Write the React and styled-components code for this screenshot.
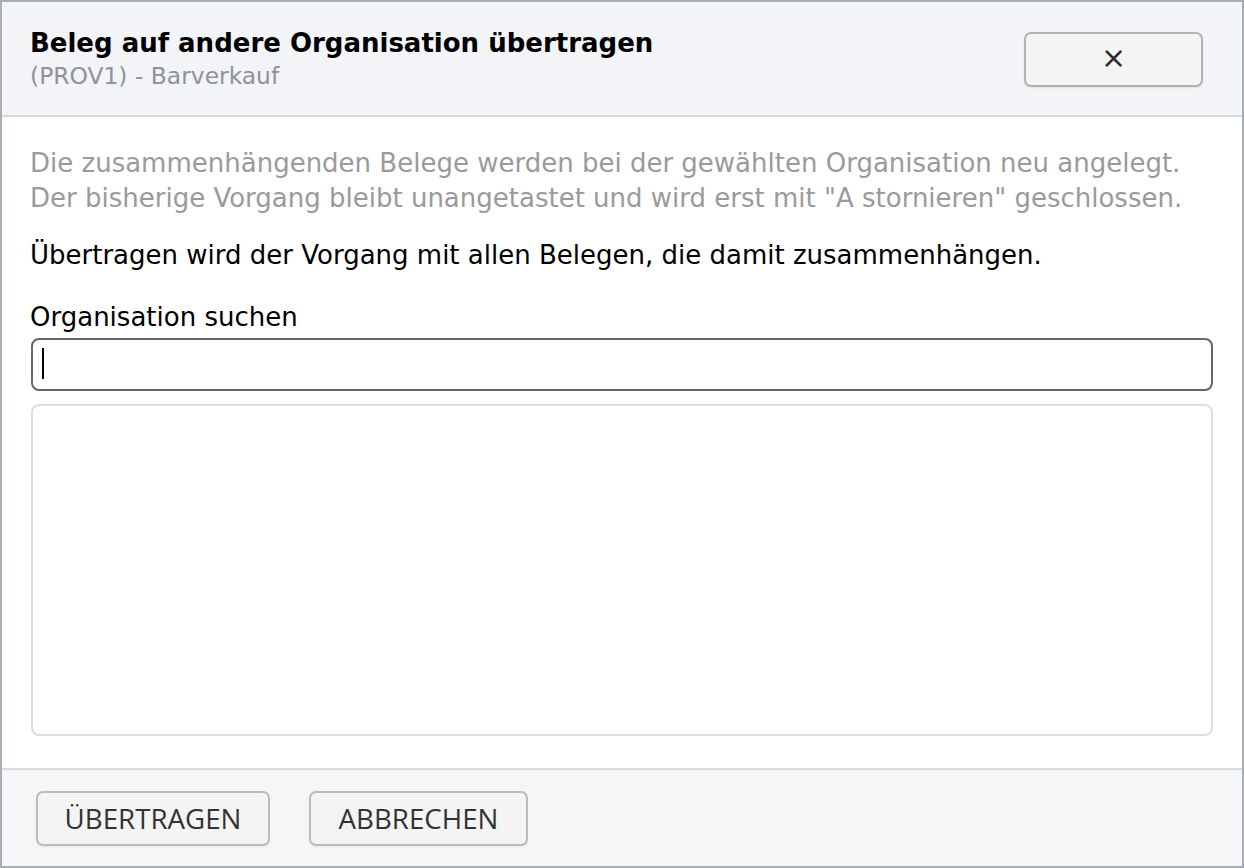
import React from 'react';
import styled, { createGlobalStyle } from 'styled-components';

const GlobalStyle = createGlobalStyle`
  html, body {
    margin: 0;
    padding: 0;
    background: #ffffff;
  }
  body {
    font-family: "DejaVu Sans", sans-serif;
  }
`;

const Dialog = styled.div`
  box-sizing: border-box;
  width: 1244px;
  height: 868px;
  border: 2px solid #a9adb5;
  display: flex;
  flex-direction: column;
  background: #fff;
`;

const Header = styled.div`
  background: #f3f4f8;
  border-bottom: 2px solid #d6dae0;
  height: 115px;
  box-sizing: border-box;
  display: flex;
  align-items: center;
  justify-content: space-between;
  padding: 0 39px 0 28px;
`;

const TitleBlock = styled.div`
  display: flex;
  flex-direction: column;
`;

const Title = styled.h2`
  margin: 0;
  font-size: 26px;
  font-weight: bold;
  color: #000;
  line-height: 34px;
`;

const Subtitle = styled.div`
  font-size: 23.4px;
  color: #8f9297;
  line-height: 32px;
`;

const CloseButton = styled.button`
  width: 179px;
  height: 55px;
  background: #f4f4f4;
  border: 2px solid #b2b2b2;
  border-radius: 7px;
  box-shadow: 0 1px 2px rgba(0, 0, 0, 0.08);
  color: #2a2a2a;
  font-family: "DejaVu Sans", sans-serif;
  font-size: 30px;
  line-height: 1;
  padding: 0 0 3px;
  cursor: pointer;
  display: flex;
  align-items: center;
  justify-content: center;
  margin-top: 2px;
`;

const Body = styled.div`
  flex: 1;
  padding: 29px 29px 32px 28px;
  display: flex;
  flex-direction: column;
`;

const Hint = styled.p`
  margin: 0;
  font-size: 26px;
  line-height: 35px;
  color: #9a9a9a;
`;

const Info = styled.p`
  margin: 22px 0 0;
  font-size: 26px;
  line-height: 35px;
  color: #000;
`;

const Label = styled.label`
  margin-top: 29px;
  font-size: 26px;
  line-height: 30px;
  color: #000;
`;

const InputWrap = styled.div`
  position: relative;
  margin-top: 6px;
  margin-left: 1px;
`;

const SearchInput = styled.input`
  box-sizing: border-box;
  display: block;
  height: 53px;
  width: 100%;
  border: 2px solid #666666;
  border-radius: 8px;
  padding: 0 10px;
  font-family: "DejaVu Sans", sans-serif;
  font-size: 26px;
  outline: none;
  caret-color: transparent;
`;

// drawn caret so the focused state shows in a still picture
const Caret = styled.span`
  position: absolute;
  left: 11px;
  top: 10px;
  width: 2px;
  height: 31px;
  background: #000;
  pointer-events: none;
`;

const ResultList = styled.div`
  box-sizing: border-box;
  margin: 13px 0 0 1px;
  flex: 1;
  border: 2px solid #dddddd;
  border-radius: 8px;
`;

const Footer = styled.div`
  background: #f6f6f6;
  border-top: 2px solid #d6dae0;
  height: 98px;
  box-sizing: border-box;
  display: flex;
  align-items: center;
  gap: 39px;
  padding: 0 34px;
`;

const FooterButton = styled.button`
  height: 55px;
  width: ${(p) => p.$width}px;
  background: #f4f4f4;
  border: 2px solid #bcbcbc;
  border-radius: 7px;
  box-shadow: 0 1px 2px rgba(0, 0, 0, 0.06);
  color: #333;
  font-family: "Open Sans", sans-serif;
  font-size: 27.7px;
  padding: 0;
  cursor: pointer;
`;

export default function App() {
  return (
    <>
      <GlobalStyle />
      <Dialog>
        <Header>
          <TitleBlock>
            <Title>Beleg auf andere Organisation übertragen</Title>
            <Subtitle>(PROV1) - Barverkauf</Subtitle>
          </TitleBlock>
          <CloseButton aria-label="Schließen">×</CloseButton>
        </Header>
        <Body>
          <Hint>
            Die zusammenhängenden Belege werden bei der gewählten Organisation neu angelegt.
            <br />
            Der bisherige Vorgang bleibt unangetastet und wird erst mit "A stornieren" geschlossen.
          </Hint>
          <Info>Übertragen wird der Vorgang mit allen Belegen, die damit zusammenhängen.</Info>
          <Label htmlFor="org-search">Organisation suchen</Label>
          <InputWrap>
            <SearchInput id="org-search" autoFocus />
            <Caret />
          </InputWrap>
          <ResultList />
        </Body>
        <Footer>
          <FooterButton $width={234}>ÜBERTRAGEN</FooterButton>
          <FooterButton $width={219}>ABBRECHEN</FooterButton>
        </Footer>
      </Dialog>
    </>
  );
}
